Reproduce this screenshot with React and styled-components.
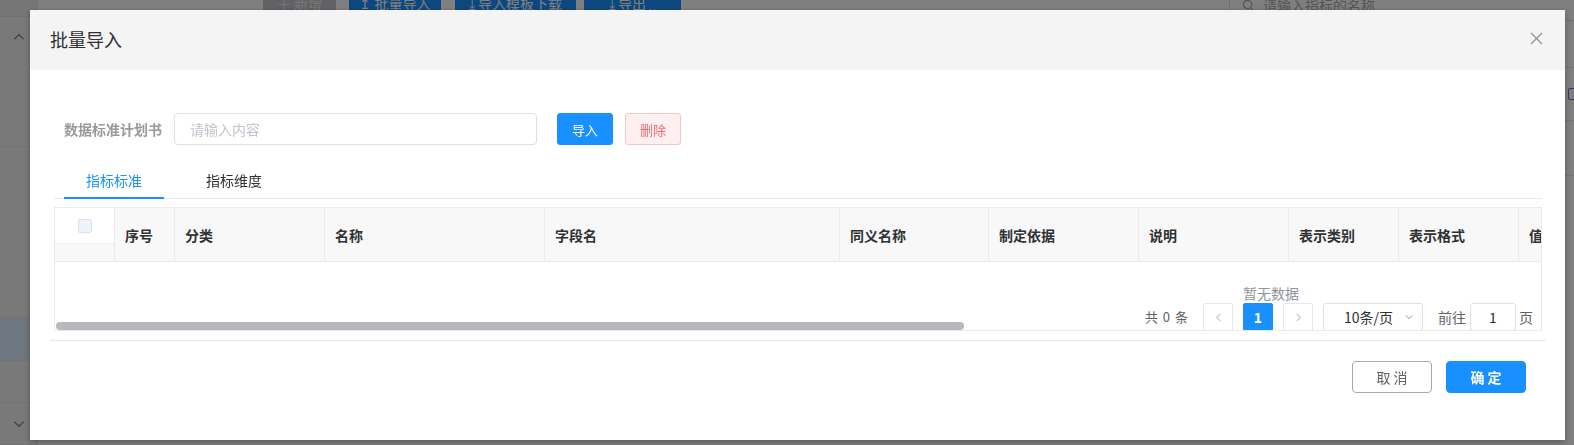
import React from 'react';
import styled, { createGlobalStyle } from 'styled-components';

const GlobalStyle = createGlobalStyle`
  html, body {
    margin: 0;
    padding: 0;
  }
  body {
    font-family: "Noto Sans CJK SC", "Noto Sans", "Liberation Sans", sans-serif;
    background: #fff;
    overflow: hidden;
  }
  * {
    box-sizing: border-box;
  }
`;

const columns = [
  { title: '序号', width: 60 },
  { title: '分类', width: 150 },
  { title: '名称', width: 220 },
  { title: '字段名', width: 295 },
  { title: '同义名称', width: 149 },
  { title: '制定依据', width: 150 },
  { title: '说明', width: 150 },
  { title: '表示类别', width: 110 },
  { title: '表示格式', width: 120 },
  { title: '值域', width: 150 },
];

const Chevron = ({ dir = 'down', size = 12, color = '#999' }) => (
  <svg width={size} height={size} viewBox="0 0 12 12" fill="none">
    {dir === 'down' && <path d="M2 4l4 4 4-4" stroke={color} strokeWidth="1.2" />}
    {dir === 'up' && <path d="M2 8l4-4 4 4" stroke={color} strokeWidth="1.2" />}
    {dir === 'left' && <path d="M8 2L4 6l4 4" stroke={color} strokeWidth="1.2" />}
    {dir === 'right' && <path d="M4 2l4 4-4 4" stroke={color} strokeWidth="1.2" />}
  </svg>
);

const App = () => {
  return (
    <>
      <GlobalStyle />
      <Page>
        <Sidebar>
          <SideTop />
          <SideItem $h={130} $top>
            <Chevron dir="up" size={14} color="#888" />
          </SideItem>
          <SideItem $h={171} />
          <SideItem $h={43} $active />
          <SideItem $h={42} />
          <SideItem $h={42}>
            <Chevron dir="down" size={14} color="#888" />
          </SideItem>
        </Sidebar>
        <Main>
          <Toolbar>
            <ToolButton $w={73} $ghost>＋ 新增</ToolButton>
            <ToolButton $w={92} $ml={13}>↥ 批量导入</ToolButton>
            <ToolButton $w={121} $ml={14}>⤓ 导入模板下载</ToolButton>
            <ToolButton $w={97} $ml={8}>⤓ 导出 ⌄</ToolButton>
            <SearchBox>
              <svg width="13" height="13" viewBox="0 0 14 14" fill="none">
                <circle cx="6" cy="6" r="4.5" stroke="#aaa" strokeWidth="1.3" />
                <path d="M9.5 9.5L13 13" stroke="#aaa" strokeWidth="1.3" />
              </svg>
              请输入指标的名称
            </SearchBox>
          </Toolbar>
          <List>
            <ListRow $h={53}>
              <RowIcon />
            </ListRow>
            <ListRow $h={55} />
            <ListRow $h={120} />
          </List>
        </Main>
      </Page>

      <Overlay />
      <Dialog>
        <DialogHeader>
          <DialogTitle>批量导入</DialogTitle>
          <CloseButton aria-label="close">
            <svg width="13" height="13" viewBox="0 0 13 13">
              <path d="M1 1l11 11M12 1L1 12" stroke="#909399" strokeWidth="1.3" />
            </svg>
          </CloseButton>
        </DialogHeader>

        <DialogBody>
          <FormRow>
            <FormLabel>数据标准计划书</FormLabel>
            <TextInput placeholder="请输入内容" />
            <SmallButton $variant="primary" $ml={20}>导入</SmallButton>
            <SmallButton $variant="danger" $ml={12}>删除</SmallButton>
          </FormRow>

          <TabNav>
            <TabItem $active>指标标准</TabItem>
            <TabItem>指标维度</TabItem>
          </TabNav>

          <Table>
            <HeaderRow>
              <SelectCell>
                <SelectTop>
                  <Checkbox />
                </SelectTop>
              </SelectCell>
              {columns.map((c) => (
                <HeadCell key={c.title} $w={c.width}>
                  {c.title}
                </HeadCell>
              ))}
            </HeaderRow>
            <TableBody>
              <Pager>
                <PagerTotal>共 0 条</PagerTotal>
                <PagerBtn $ml={15}>
                  <Chevron dir="left" size={11} color="#c0c4cc" />
                </PagerBtn>
                <PagerCenter>
                  <EmptyText>暂无数据</EmptyText>
                  <PagerBtn $active>1</PagerBtn>
                </PagerCenter>
                <PagerBtn $ml={10}>
                  <Chevron dir="right" size={11} color="#c0c4cc" />
                </PagerBtn>
                <SizeSelect>
                  <span>10条/页</span>
                  <Chevron dir="down" size={10} color="#999" />
                </SizeSelect>
                <PagerText $ml={15}>前往</PagerText>
                <JumpInput>1</JumpInput>
                <PagerText $ml={3}>页</PagerText>
              </Pager>
              <ScrollThumb />
            </TableBody>
          </Table>

          <DialogFooter>
            <FooterButton>取 消</FooterButton>
            <FooterButton $primary>确 定</FooterButton>
          </DialogFooter>
        </DialogBody>
      </Dialog>
    </>
  );
};

export default App;

/* ---------- background page ---------- */

const Page = styled.div`
  display: flex;
  width: 1574px;
  height: 445px;
  overflow: hidden;
  background: #fff;
`;

const Sidebar = styled.aside`
  width: 38px;
  flex-shrink: 0;
  display: flex;
  flex-direction: column;
  background: #f2f2f2;
  border-right: 1px solid #e4e4e4;
`;

const SideTop = styled.div`
  height: 17px;
  background: #ececec;
  border-bottom: 1px solid #e2e2e2;
`;

const SideItem = styled.div`
  height: ${(p) => p.$h}px;
  display: flex;
  align-items: ${(p) => (p.$top ? 'flex-start' : 'center')};
  justify-content: center;
  padding-top: ${(p) => (p.$top ? 13 : 0)}px;
  background: ${(p) => (p.$active ? '#dcecff' : 'transparent')};
  border-bottom: 1px solid #e6e6e6;
`;

const Main = styled.main`
  flex: 1;
  min-width: 0;
  display: flex;
  flex-direction: column;
`;

const Toolbar = styled.div`
  height: 32px;
  margin-top: -13px;
  display: flex;
  align-items: flex-start;
  padding-left: 225px;
`;

const ToolButton = styled.div`
  width: ${(p) => p.$w}px;
  height: 32px;
  margin-left: ${(p) => p.$ml || 0}px;
  flex-shrink: 0;
  display: flex;
  align-items: center;
  justify-content: center;
  font-size: 14px;
  color: ${(p) => (p.$ghost ? '#eeeeee' : '#fff')};
  background: ${(p) => (p.$ghost ? '#c4c4cc' : '#1890ff')};
  border-radius: 3px;
`;

const SearchBox = styled.div`
  margin-left: auto;
  margin-top: 2px;
  margin-right: -60px;
  width: 405px;
  height: 32px;
  display: flex;
  align-items: center;
  gap: 8px;
  padding: 0 12px;
  font-size: 14px;
  color: #aaa;
  border: 1px solid #dcdfe6;
`;

const List = styled.div`
  margin-top: 48px;
  display: flex;
  flex-direction: column;
`;

const ListRow = styled.div`
  height: ${(p) => p.$h}px;
  display: flex;
  align-items: center;
  justify-content: flex-end;
  border-top: 1px solid #e6e6e6;
`;

const RowIcon = styled.span`
  width: 12px;
  height: 12px;
  margin-right: -6px;
  border: 1.5px solid #5b6bd8;
  border-radius: 2px;
`;

/* ---------- dialog ---------- */

const Overlay = styled.div`
  position: fixed;
  inset: 0;
  background: rgba(0, 0, 0, 0.5);
`;

const Dialog = styled.div`
  position: fixed;
  left: 30px;
  top: 10px;
  width: 1535px;
  height: 430px;
  display: flex;
  flex-direction: column;
  background: #fff;
  box-shadow: 0 2px 6px rgba(0, 0, 0, 0.3);
`;

const DialogHeader = styled.div`
  height: 60px;
  flex-shrink: 0;
  display: flex;
  align-items: center;
  justify-content: space-between;
  padding: 0 22px 3px 20px;
  background: #f4f4f4;
`;

const DialogTitle = styled.span`
  font-size: 18px;
  line-height: 24px;
  color: #303133;
`;

const CloseButton = styled.button`
  border: 0;
  padding: 0;
  background: none;
  display: flex;
  cursor: pointer;
`;

const DialogBody = styled.div`
  flex: 1;
  display: flex;
  flex-direction: column;
  padding: 43px 19px 0 20px;
`;

const FormRow = styled.div`
  display: flex;
  align-items: center;
  padding-left: 14px;
  height: 32px;
`;

const FormLabel = styled.label`
  font-size: 14px;
  font-weight: 700;
  color: #999;
  margin-right: 12px;
`;

const TextInput = styled.input`
  width: 363px;
  height: 32px;
  padding: 0 15px;
  border: 1px solid #dcdfe6;
  border-radius: 4px;
  font-family: inherit;
  font-size: 14px;
  color: #606266;
  outline: none;

  &::placeholder {
    color: #c0c4cc;
  }
`;

const SmallButton = styled.button`
  width: 56px;
  height: 32px;
  margin-left: ${(p) => p.$ml || 0}px;
  font-family: inherit;
  font-size: 13px;
  border-radius: 3px;
  cursor: pointer;
  color: ${(p) => (p.$variant === 'primary' ? '#fff' : '#f56c6c')};
  background: ${(p) => (p.$variant === 'primary' ? '#1890ff' : '#fef0f0')};
  border: 1px solid ${(p) => (p.$variant === 'primary' ? '#1890ff' : '#fbc4c4')};
`;

const TabNav = styled.div`
  display: flex;
  margin: 18px 4px 0;
  padding-left: 10px;
  border-bottom: 1px solid #e4e7ed;
`;

const TabItem = styled.div`
  width: 100px;
  height: 36px;
  margin-right: 20px;
  margin-bottom: -1px;
  display: flex;
  align-items: center;
  justify-content: center;
  font-size: 14px;
  color: ${(p) => (p.$active ? '#1890ff' : '#303133')};
  border-bottom: 2px solid ${(p) => (p.$active ? '#1890ff' : 'transparent')};
`;

const Table = styled.div`
  position: relative;
  margin: 8px 4px 0;
  border: 1px solid #e8eaec;
  overflow: hidden;
`;

const HeaderRow = styled.div`
  display: flex;
  height: 54px;
  width: max-content;
  background: #f8f8f9;
  border-bottom: 1px solid #e8eaec;
`;

const SelectCell = styled.div`
  width: 60px;
  flex-shrink: 0;
  border-right: 1px solid #e8eaec;
`;

const SelectTop = styled.div`
  height: 36px;
  display: flex;
  align-items: center;
  justify-content: center;
  background: #fff;
  border-bottom: 1px solid #ebeef5;
`;

const Checkbox = styled.span`
  width: 14px;
  height: 14px;
  border: 1px solid #dcdfe6;
  border-radius: 2px;
  background: #edf2fc;
`;

const HeadCell = styled.div`
  width: ${(p) => p.$w}px;
  flex-shrink: 0;
  display: flex;
  align-items: center;
  padding-left: 10px;
  font-size: 14px;
  font-weight: 700;
  color: #303133;
  border-right: 1px solid #e8eaec;
`;

const TableBody = styled.div`
  position: relative;
  height: 68px;
  overflow: hidden;
  background: #fff;
`;

const Pager = styled.div`
  display: flex;
  align-items: flex-end;
  justify-content: flex-end;
  height: 100%;
  padding: 0 8px 0 0;
  margin-bottom: -1px;
  font-size: 13px;
  color: #606266;
`;

const PagerTotal = styled.span`
  height: 28px;
  line-height: 28px;
  margin-bottom: -1px;
  word-spacing: 2px;
`;

const PagerCenter = styled.div`
  display: flex;
  flex-direction: column;
  align-items: flex-start;
  margin-left: 10px;
`;

const EmptyText = styled.span`
  width: 0;
  white-space: nowrap;
  font-size: 14px;
  line-height: 18px;
  color: #909399;
  margin-bottom: 1px;
`;

const PagerBtn = styled.div`
  width: 30px;
  height: 28px;
  margin-left: ${(p) => p.$ml || 0}px;
  margin-bottom: -1px;
  display: flex;
  align-items: center;
  justify-content: center;
  font-size: 14px;
  font-weight: 700;
  border-radius: 2px;
  color: #fff;
  background: ${(p) => (p.$active ? '#1890ff' : '#fff')};
  border: 1px solid ${(p) => (p.$active ? '#1890ff' : '#e4e7ed')};
`;

const SizeSelect = styled.div`
  width: 100px;
  height: 28px;
  margin-left: 10px;
  margin-bottom: -1px;
  display: flex;
  align-items: center;
  justify-content: space-between;
  padding: 0 8px 0 20px;
  font-size: 14px;
  color: #303133;
  border: 1px solid #dcdfe6;
  border-radius: 3px;
`;

const PagerText = styled.span`
  height: 28px;
  line-height: 28px;
  margin-left: ${(p) => p.$ml || 0}px;
  margin-bottom: -1px;
  font-size: 14px;
  color: #606266;
`;

const JumpInput = styled.div`
  width: 46px;
  height: 28px;
  margin-left: 4px;
  margin-bottom: -1px;
  display: flex;
  align-items: center;
  justify-content: center;
  font-size: 14px;
  color: #303133;
  border: 1px solid #dcdfe6;
  border-radius: 3px;
`;

const ScrollThumb = styled.div`
  position: absolute;
  left: 1px;
  bottom: 0;
  width: 908px;
  height: 8px;
  border-radius: 4px;
  background: #b6b8bd;
`;

const DialogFooter = styled.div`
  display: flex;
  justify-content: flex-end;
  gap: 14px;
  margin-top: 9px;
  padding: 20px 20px 0;
  border-top: 1px solid #e8e8e8;
`;

const FooterButton = styled.button`
  width: 80px;
  height: 32px;
  font-family: inherit;
  font-size: 14px;
  font-weight: ${(p) => (p.$primary ? 700 : 400)};
  border-radius: 4px;
  cursor: pointer;
  color: ${(p) => (p.$primary ? '#fff' : '#606266')};
  background: ${(p) => (p.$primary ? '#1890ff' : '#fff')};
  border: 1px solid ${(p) => (p.$primary ? '#1890ff' : '#a8a8a8')};
`;
